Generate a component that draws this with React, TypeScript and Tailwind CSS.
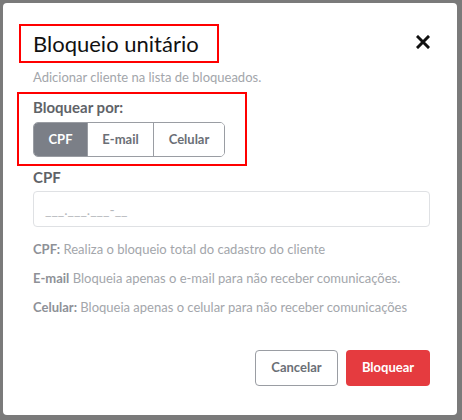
import { useState } from "react";

const options = ["CPF", "E-mail", "Celular"];

const App = () => {
  const [active, setActive] = useState("CPF");

  return (
    <div className="h-[420px] w-[462px] bg-[#7a7a7a] p-[3px] font-['Lato',sans-serif]">
      <div className="flex h-[412px] w-[454px] flex-col rounded-[4px] bg-white pl-[30px] pr-[27px] pt-[21px]">
        <div className="flex items-start justify-between">
          <div className="-ml-[14px] w-[200px] border-2 border-[#f00] px-[12px] py-[6px]">
            <h2 className="whitespace-nowrap text-[22px] leading-[23px] text-[#111]">Bloqueio unitário</h2>
          </div>
          <button type="button" className="mt-[11px] text-[#111]">
            <svg width="14" height="14" viewBox="0 0 14 14">
              <path d="M2 2 L12 12 M12 2 L2 12" stroke="currentColor" strokeWidth="3" strokeLinecap="square" />
            </svg>
          </button>
        </div>

        <p className="mt-[6px] text-[13px] leading-[16px] text-[#a3a6ab]">
          Adicionar cliente na lista de bloqueados.
        </p>

        <div className="-ml-[16px] mt-[7px] w-[230px] border-2 border-[#f00] px-[14px] pb-[7px] pt-[4px]">
          <p className="text-[15px] font-bold leading-[18px] text-[#5f6368]">Bloquear por:</p>
          <div className="mt-[6px] flex h-[35px] w-[192px] overflow-hidden rounded-[5px] border border-[#9a9da3]">
            {options.map((item, index) => {
              const isActive = active === item;
              return (
                <button
                  key={item}
                  type="button"
                  onClick={() => setActive(item)}
                  className={`flex items-center justify-center text-[13px] font-bold ${
                    index === 0 ? "w-[53px]" : index === 1 ? "w-[66px] border-l border-[#9a9da3]" : "flex-1 border-l border-[#9a9da3]"
                  } ${isActive ? "bg-[#7b7f87] text-white" : "bg-white text-[#6b6f76]"}`}
                >
                  {item}
                </button>
              );
            })}
          </div>
        </div>

        <label className="mt-[2px] text-[15px] font-bold leading-[18px] text-[#5f6368]">CPF</label>
        <div className="mt-[5px] flex h-[36px] w-[397px] items-center rounded-[4px] border border-[#dfe1e4] px-[11px]">
          <span className="text-[14px] text-[#b5b8bc]">___.___.___-__</span>
        </div>

        <div className="mt-[14px] flex flex-col gap-[13px] text-[13px] leading-[16px] text-[#a3a6ab]">
          <p>
            <span className="font-bold text-[#8e9197]">CPF:</span> Realiza o bloqueio total do cadastro do cliente
          </p>
          <p>
            <span className="font-bold text-[#8e9197]">E-mail</span> Bloqueia apenas o e-mail para não receber comunicações.
          </p>
          <p>
            <span className="font-bold text-[#8e9197]">Celular:</span> Bloqueia apenas o celular para não receber comunicações
          </p>
        </div>

        <div className="mt-[35px] flex justify-end gap-[8px]">
          <button
            type="button"
            className="h-[36px] w-[83px] rounded-[4px] border border-[#9a9da3] bg-white text-[13px] font-bold text-[#6b6f76]"
          >
            Cancelar
          </button>
          <button
            type="button"
            className="h-[36px] w-[84px] rounded-[4px] bg-[#e53b3f] text-[13px] font-bold text-white"
          >
            Bloquear
          </button>
        </div>
      </div>
    </div>
  );
};

export default App;
